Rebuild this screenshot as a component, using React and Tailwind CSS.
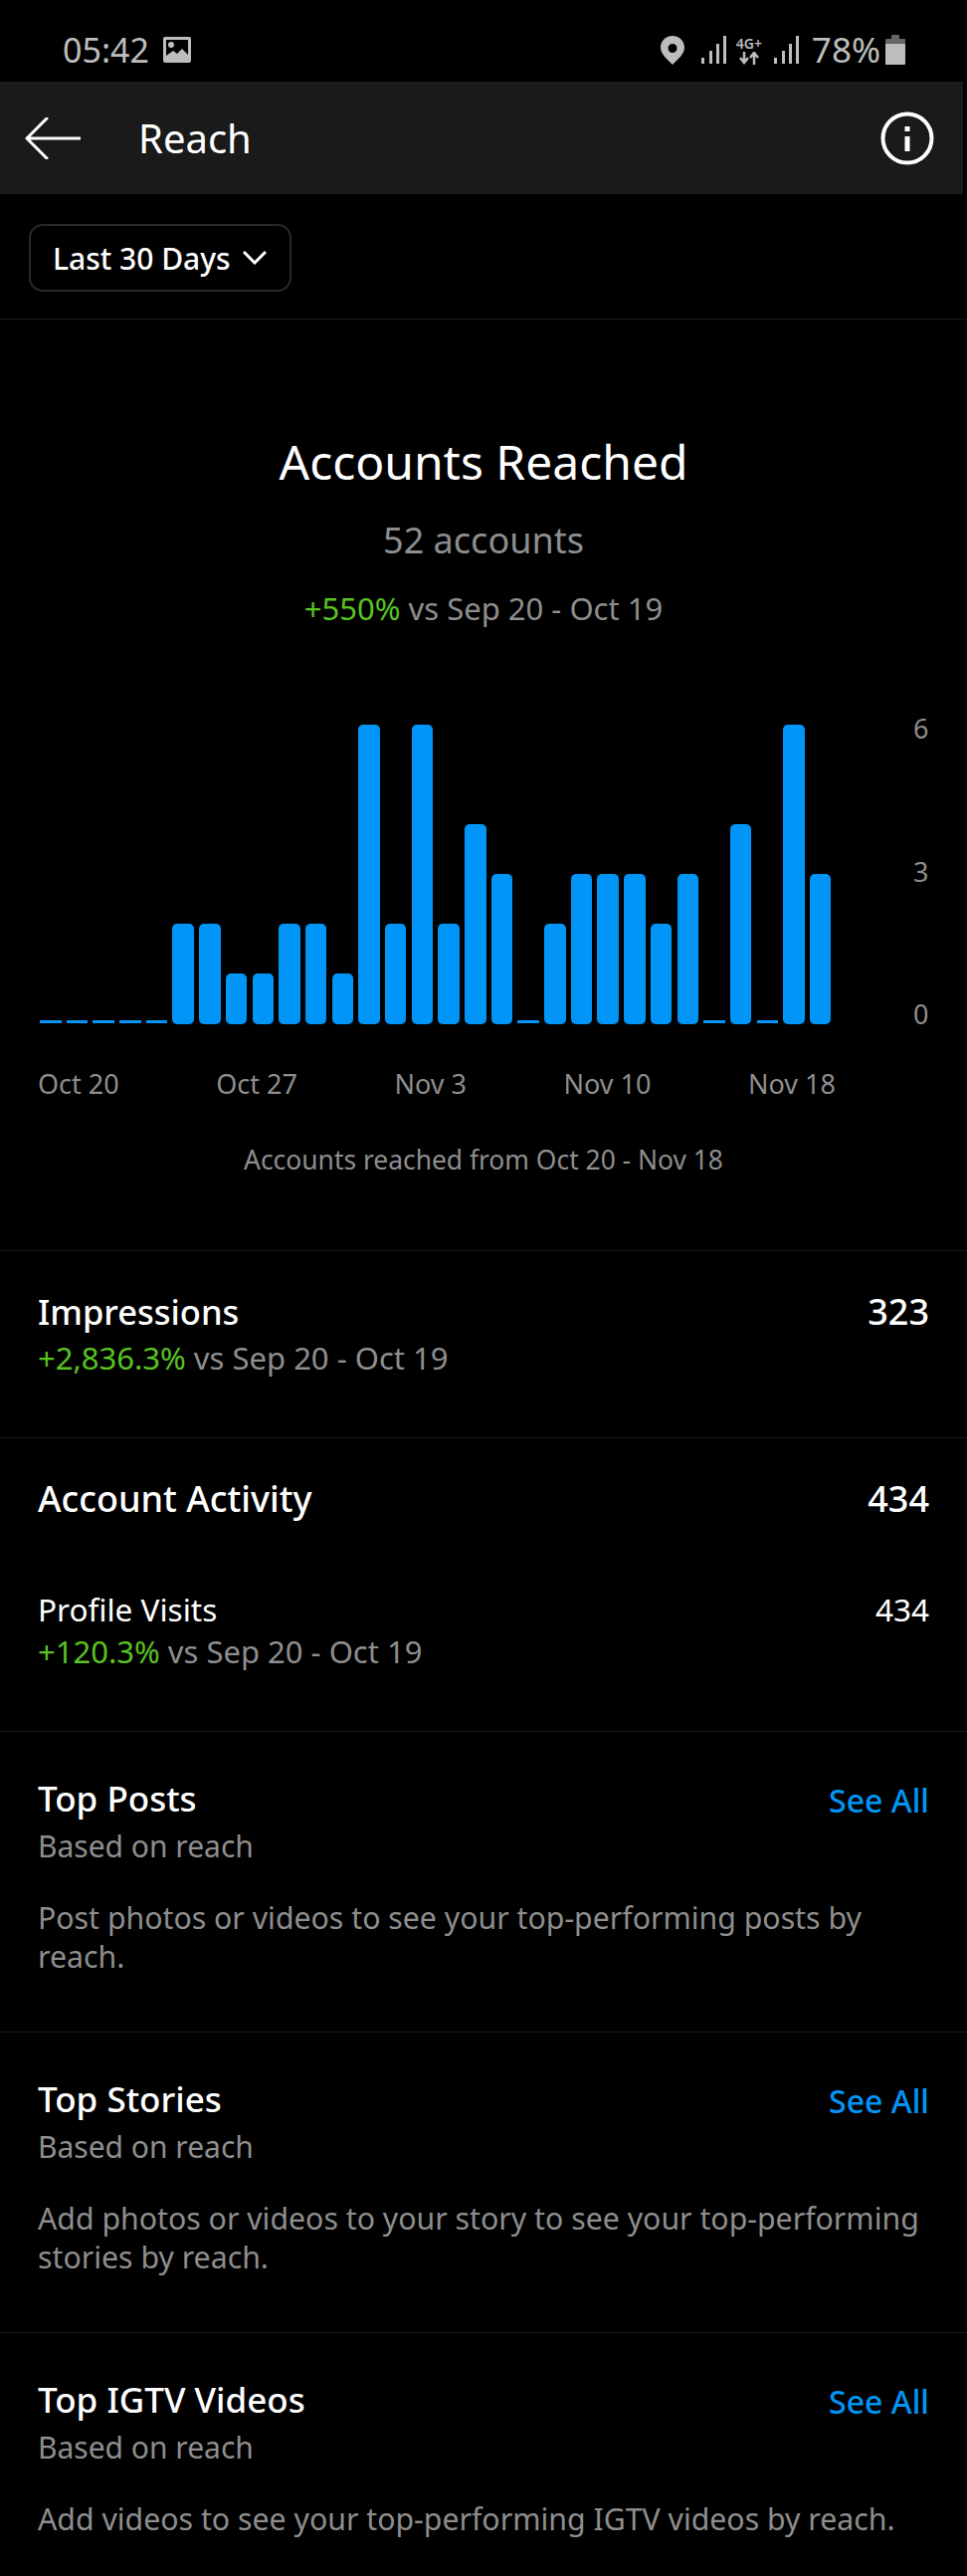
const values = [0,0,0,0,0,2,2,1,1,2,2,1,6,2,6,2,4,3,0,2,3,3,3,2,3,0,4,0,6,3];
const heights = { 0: 'h-[3px]', 1: 'h-[51px]', 2: 'h-[101px]', 3: 'h-[151px]', 4: 'h-[201px]', 6: 'h-[301px]' };

function Pct({ value }) {
  return (
    <div className="text-[31px] leading-[42px] text-[#8e8e8e]">
      <span className="text-[#58c322]">{value}</span> vs Sep 20 - Oct 19
    </div>
  );
}

function Section({ title, text }) {
  return (
    <section className="border-t border-[#1c1c1c] px-[38px] pt-[42px] h-[302px]">
      <div className="flex justify-between items-start">
        <div className="text-[35px] leading-[50px] font-medium text-white">{title}</div>
        <div className="text-[32px] leading-[54px] font-medium text-[#0095f6]">See All</div>
      </div>
      <div className="-mt-[4px] text-[30px] leading-[46px] text-[#8e8e8e]">Based on reach</div>
      <p className="mt-[29px] text-[30.250px] leading-[39px] text-[#8e8e8e]">{text}</p>
    </section>
  );
}

export default function App() {
  return (
    <div className="w-[972px] h-[2588px] overflow-hidden bg-black font-['Noto_Sans',sans-serif]">
      <div className="h-[82px] flex items-start justify-between pl-[63px] pr-[62px] pt-[28px] text-[#bdbdbd]">
        <div className="flex items-center gap-[14px]">
          <span className="text-[34px] leading-[44px]">05:42</span>
          <svg width="28" height="26" viewBox="0 0 28 26"><rect width="28" height="26" rx="2" fill="#bdbdbd"/><path d="M3 3h22v15l-6-6-5 5-4-3-7 5z" fill="#000"/><circle cx="8" cy="8" r="3" fill="#bdbdbd"/></svg>
        </div>
        <div className="flex items-center">
          <svg width="24" height="29" viewBox="0 0 24 29" className="mr-[16px]"><path fillRule="evenodd" d="M12 0C5 0 0 5 0 12c0 6 7 12 12 17 5-5 12-11 12-17C24 5 19 0 12 0zm0 8a4.500 4.500 0 1 1 0 9 4.500 4.500 0 0 1 0-9z" fill="#bdbdbd"/></svg>
          <svg width="26" height="28" viewBox="0 0 26 28"><path d="M1 22h3v6H1zM9 15h3v13H9zM16 8h3v20h-3zM23 0h3v28h-3z" fill="#bdbdbd"/></svg>
          <div className="w-[28px] ml-[9px] mr-[10px] flex flex-col items-center">
            <span className="text-[14px] leading-[16px] font-semibold">4G+</span>
            <svg width="22" height="13" viewBox="0 0 22 13"><path d="M6 0v9M2 6l4 5 4-5M16 13V3M12 6l4-5 4 5" stroke="#bdbdbd" strokeWidth="2.500" fill="none"/></svg>
          </div>
          <svg width="26" height="28" viewBox="0 0 26 28"><path d="M1 22h3v6H1zM9 15h3v13H9zM16 8h3v20h-3zM23 0h3v28h-3z" fill="#bdbdbd"/></svg>
          <span className="text-[35px] leading-[44px] ml-[13px]">78%</span>
          <svg width="20" height="30" viewBox="0 0 20 30" className="ml-[5px]"><path d="M6 0h8v4h5a1 1 0 0 1 1 1v5H0V5a1 1 0 0 1 1-1h5z" fill="#666"/><path d="M0 9h20v20a1 1 0 0 1-1 1H1a1 1 0 0 1-1-1z" fill="#bdbdbd"/></svg>
        </div>
      </div>

      <header className="h-[113px] w-[968px] bg-[#1a1a1a] flex items-center pl-[25px] pr-[29px]">
        <svg width="56" height="42" viewBox="0 0 56 42" fill="none" stroke="#fff" strokeWidth="3" strokeLinecap="round" strokeLinejoin="round"><path d="M55 21H2M22 1L2 21l20 20"/></svg>
        <h1 className="ml-[58px] flex-1 text-[40px] leading-[52px] text-white font-normal">Reach</h1>
        <svg width="54" height="54" viewBox="0 0 54 54" fill="none"><circle cx="27" cy="27" r="24.500" stroke="#fff" strokeWidth="4"/><rect x="24.500" y="25" width="5" height="15" fill="#fff"/><rect x="24.500" y="15" width="5" height="5" fill="#fff"/></svg>
      </header>

      <div className="h-[126px] px-[29px] pt-[30px] border-b border-[#1c1c1c]">
        <button className="h-[68px] w-[264px] rounded-[14px] border-2 border-[#2a2a2a] flex items-center pl-[22px] text-white text-[30px] font-medium">
          Last 30 Days
          <svg width="24" height="14" viewBox="0 0 24 14" fill="none" stroke="#fff" strokeWidth="3" className="ml-[12px]"><path d="M1 1l11 11L23 1"/></svg>
        </button>
      </div>

      <section className="h-[935px]">
        <h2 className="pt-[111px] text-center text-[48px] leading-[64px] text-white font-normal">Accounts Reached</h2>
        <div className="mt-[23px] text-center text-[36px] leading-[48px] text-[#8e8e8e]">52 accounts</div>
        <div className="mt-[23px] text-center text-[31px] leading-[42px] text-[#8e8e8e]"><span className="text-[#58c322]">+550%</span> vs Sep 20 - Oct 19</div>

        <div className="mt-[94px] pl-[40px] flex">
          <div className="flex items-end h-[303px] gap-[5.200px] w-[796px]">
            {values.map((v, i) => (
              <div key={i} className={`w-[21.500px] ${heights[v]} ${v === 0 ? 'rounded-none mb-[1px]' : 'rounded-[5px]'} bg-[#0095f6]`} />
            ))}
          </div>
          <div className="ml-[82px] -mt-[12px] h-[323px] flex flex-col justify-between text-[27px] leading-[36px] text-[#8e8e8e]">
            <span>6</span><span>3</span><span>0</span>
          </div>
        </div>

        <div className="mt-[34px] pl-[38px] pr-[132px] flex justify-between text-[27px] leading-[36px] text-[#8e8e8e]">
          <span>Oct 20</span><span>Oct 27</span><span>Nov 3</span><span>Nov 10</span><span>Nov 18</span>
        </div>
        <div className="mt-[40px] text-center text-[26.400px] leading-[36px] text-[#8e8e8e]">Accounts reached from Oct 20 - Nov 18</div>
      </section>

      <section className="h-[188px] border-t border-[#1c1c1c] px-[38px] pt-[36px]">
        <div className="flex justify-between text-[36px] leading-[50px] font-medium text-white"><span className="text-[34.500px]">Impressions</span><span>323</span></div>
        <Pct value="+2,836.3%" />
      </section>

      <section className="h-[295px] border-t border-[#1c1c1c] px-[38px] pt-[36px]">
        <div className="flex justify-between text-[36px] leading-[50px] font-medium text-white"><span>Account Activity</span><span>434</span></div>
        <div className="mt-[65px] flex justify-between text-[31.500px] leading-[42px] text-white"><span>Profile Visits</span><span>434</span></div>
        <Pct value="+120.3%" />
      </section>

      <Section title="Top Posts" text="Post photos or videos to see your top-performing posts by reach." />
      <Section title="Top Stories" text="Add photos or videos to your story to see your top-performing stories by reach." />
      <Section title="Top IGTV Videos" text="Add videos to see your top-performing IGTV videos by reach." />
    </div>
  );
}
